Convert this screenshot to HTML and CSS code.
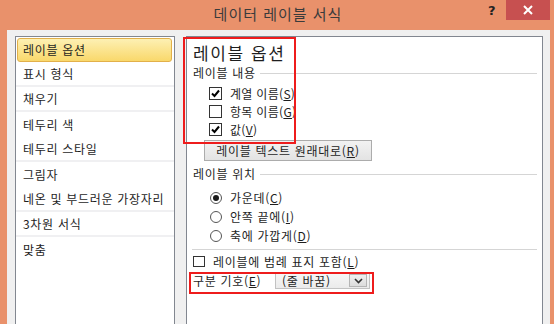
FILE: index.html
```html
<!DOCTYPE html>
<html lang="ko">
<head>
    <meta charset="UTF-8">
    <title>데이터 레이블 서식</title>
    <link rel="stylesheet" href="styles.css">
</head>
<body>
    <div class="window">
        <div class="titlebar">
            <span class="title">데이터 레이블 서식</span>
            <span class="help">?</span>
            <span class="close">
                <svg width="12" height="12" viewBox="0 0 12 12"><path d="M2 2 L10 10 M10 2 L2 10" stroke="#fff" stroke-width="2"/></svg>
            </span>
        </div>
        <div class="client">
            <ul class="nav">
                <li class="selected">레이블 옵션</li>
                <li class="sep">표시 형식</li>
                <li class="sep">채우기</li>
                <li>테두리 색</li>
                <li class="sep">테두리 스타일</li>
                <li>그림자</li>
                <li class="sep">네온 및 부드러운 가장자리</li>
                <li class="sep">3차원 서식</li>
                <li>맞춤</li>
            </ul>
            <div class="pane">
                <div class="heading">레이블 옵션</div>
                <div class="group-title"><span>레이블 내용</span><span class="rule"></span></div>
                <div class="opt check-row"><span class="box checked"><svg width="11" height="11" viewBox="0 0 11 11"><path d="M2 5.5 L4.5 8 L9 2.5" fill="none" stroke="#000" stroke-width="2"/></svg></span>계열 이름(<u>S</u>)</div>
                <div class="opt check-row"><span class="box"></span>항목 이름(<u>G</u>)</div>
                <div class="opt check-row"><span class="box checked"><svg width="11" height="11" viewBox="0 0 11 11"><path d="M2 5.5 L4.5 8 L9 2.5" fill="none" stroke="#000" stroke-width="2"/></svg></span>값(<u>V</u>)</div>
                <button class="reset" type="button">레이블 텍스트 원래대로(<u>R</u>)</button>

                <div class="group-title pos-title"><span>레이블 위치</span><span class="rule"></span></div>
                <div class="opt radio-row"><span class="radio on"></span>가운데(<u>C</u>)</div>
                <div class="opt radio-row"><span class="radio"></span>안쪽 끝에(<u>I</u>)</div>
                <div class="opt radio-row"><span class="radio"></span>축에 가깝게(<u>D</u>)</div>

                <div class="divider"></div>
                <div class="legend-row"><span class="box"></span>레이블에 범례 표지 포함(<u>L</u>)</div>
                <div class="delim-row">
                    <span>구분 기호(<u>E</u>)</span>
                    <span class="combo">
                        <span class="combo-text">(줄 바꿈)</span>
                        <span class="combo-btn"><svg width="9" height="6" viewBox="0 0 9 6"><path d="M1 1 L4.5 4.5 L8 1" fill="none" stroke="#333" stroke-width="1.6"/></svg></span>
                    </span>
                </div>

                <div class="mark mark-content"></div>
                <div class="mark mark-delim"></div>
            </div>
        </div>
    </div>
</body>
</html>
```

FILE: styles.css
```css
body {
    margin: 0;
    font-family: "Noto Sans CJK KR", "Noto Sans", sans-serif;
    font-size: 12px;
    letter-spacing: 0.7px;
    color: #1e1e1e;
}
.window {
    width: 554px;
    height: 324px;
    background-color: #e9916b;
    overflow: hidden;
}
.titlebar {
    position: relative;
    height: 30px;
    text-align: center;
}
.title {
    display: inline-block;
    margin-left: 2px;
    line-height: 28px;
    font-size: 15px;
    letter-spacing: 1px;
    color: #3b3b3b;
}
.help {
    position: absolute;
    left: 488px;
    top: 3px;
    font-family: "DejaVu Sans", sans-serif;
    font-weight: bold;
    font-size: 13px;
    color: #222;
}
.close {
    position: absolute;
    left: 506px;
    top: 0;
    width: 44px;
    height: 20px;
    background-color: #c75050;
    display: flex;
    align-items: center;
    justify-content: center;
}
.client {
    display: flex;
    gap: 11px;
    margin: 0 4px 0 7px;
    height: 294px;
    padding: 6px 7px 0 8px;
    background-color: #f0f0f0;
    box-sizing: border-box;
    overflow: hidden;
}
.nav {
    width: 160px;
    height: 300px;
    margin: 0;
    padding: 0;
    list-style: none;
    background-color: #fff;
    border: 1px solid #828790;
    box-sizing: border-box;
    flex-shrink: 0;
}
.nav li {
    height: 25px;
    line-height: 25px;
    padding-left: 7px;
    box-sizing: border-box;
    white-space: nowrap;
}
.nav li.sep {
    border-bottom: 2px solid #f0f0f2;
    line-height: 24px;
}
.nav li.selected {
    margin: 1px 2px 0 1px;
    height: 24px;
    line-height: 22px;
    padding-left: 5px;
    border: 1px solid #e2b04a;
    border-radius: 3px;
    background: linear-gradient(#fdf0b3, #f9d86b);
}
.pane {
    position: relative;
    width: 357px;
    height: 300px;
    background-color: #fff;
    border: 1px solid #828790;
    box-sizing: border-box;
    padding: 5px 5px 0 6px;
}
.heading {
    font-size: 17px;
    letter-spacing: 1.6px;
    line-height: 22px;
    height: 22px;
}
.group-title {
    display: flex;
    align-items: center;
    gap: 4px;
    height: 16px;
    line-height: 16px;
    margin-top: 1px;
}
.group-title .rule {
    flex: 1;
    height: 1px;
    background-color: #d5d5d5;
}
.opt {
    display: flex;
    align-items: center;
    padding-left: 16px;
}
.check-row {
    height: 18px;
    letter-spacing: 0.3px;
}
.box {
    width: 13px;
    height: 13px;
    border: 1px solid #333;
    box-sizing: border-box;
    margin-right: 8px;
    display: flex;
    align-items: center;
    justify-content: center;
    background-color: #fff;
    flex-shrink: 0;
}
.group-title + .check-row {
    margin-top: 3px;
}
.reset {
    display: block;
    margin: 2px 0 0 11px;
    width: 168px;
    height: 21px;
    padding: 0;
    font-family: inherit;
    font-size: 12px;
    letter-spacing: 0.7px;
    line-height: 19px;
    color: #1e1e1e;
    border: 1px solid #acacac;
    background: linear-gradient(#f2f2f2, #e3e3e3);
}
.pos-title {
    margin-top: 5px;
}
.radio-row {
    height: 19px;
    padding-left: 17px;
}
.pos-title + .radio-row {
    margin-top: 6px;
}
.radio {
    width: 12px;
    height: 12px;
    border: 1px solid #555;
    border-radius: 50%;
    box-sizing: border-box;
    margin-right: 8px;
    display: flex;
    align-items: center;
    justify-content: center;
    flex-shrink: 0;
}
.radio.on::after {
    content: "";
    width: 6px;
    height: 6px;
    border-radius: 50%;
    background-color: #1a1a1a;
}
.divider {
    height: 1px;
    margin: 4px 0 0 -1px;
    background-color: #d5d5d5;
}
.legend-row {
    display: flex;
    align-items: center;
    height: 16px;
    margin-top: 3px;
}
.legend-row .box {
    width: 12px;
    height: 11px;
    margin-right: 8px;
}
.delim-row {
    display: flex;
    align-items: center;
    height: 17px;
    margin-top: 3px;
}
.delim-row > span:first-child {
    width: 82px;
}
.combo {
    display: flex;
    align-items: center;
    width: 95px;
    height: 17px;
    border: 1px solid #c2c2c2;
    box-sizing: border-box;
    background: linear-gradient(#f7f7f7, #ebebeb);
}
.combo-text {
    flex: 1;
    padding-left: 6px;
    line-height: 15px;
}
.combo-btn {
    width: 18px;
    height: 13px;
    margin-right: 2px;
    border: 1px solid #b5b5b5;
    box-sizing: border-box;
    background: linear-gradient(#efefef, #dcdcdc);
    display: flex;
    align-items: center;
    justify-content: center;
}
.mark {
    position: absolute;
    border: 2px solid #ee1c1c;
    box-sizing: border-box;
}
.mark-content {
    left: -4px;
    top: 0;
    width: 113px;
    height: 107px;
}
.mark-delim {
    left: 2px;
    top: 235px;
    width: 185px;
    height: 22px;
}
```
